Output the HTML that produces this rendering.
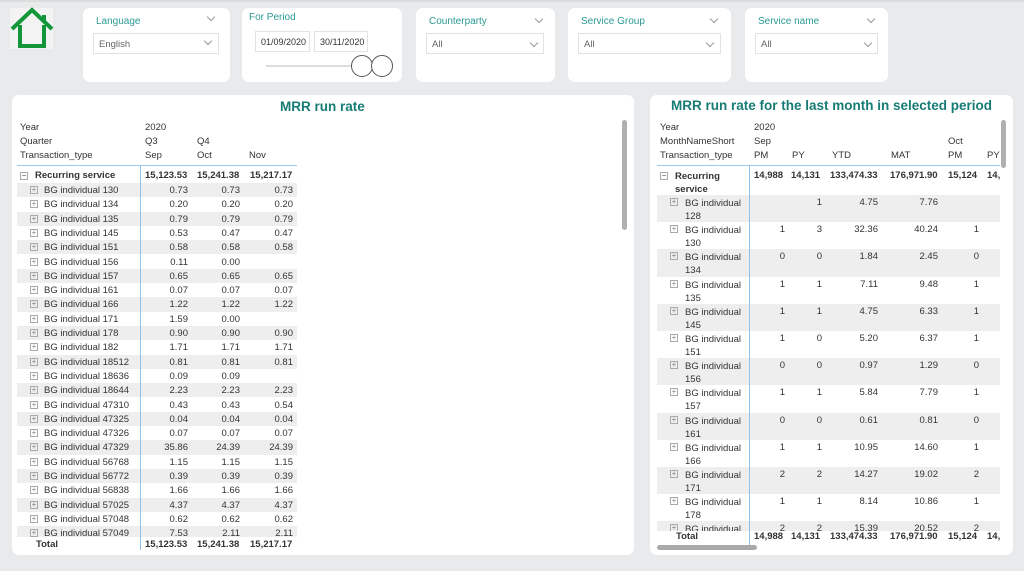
<!DOCTYPE html>
<html><head><meta charset="utf-8"><style>
*{margin:0;padding:0;box-sizing:border-box}
body{width:1024px;height:571px;background:#e9eaec;font-family:"Liberation Sans",sans-serif;position:relative;overflow:hidden;color:#333}
.a{position:absolute}
.card{position:absolute;background:#fff;border-radius:7px}
.lbl{position:absolute;color:#2b9a94;font-size:10px}
.chev{position:absolute;width:6px;height:6px;border-right:1px solid #999;border-bottom:1px solid #999;transform:rotate(45deg)}
.dd{position:absolute;border:1px solid #e2e2e2;height:21px;font-size:9.5px;color:#666;padding:5px 0 0 5px}
.t{font-size:9.5px;white-space:nowrap}
.r{position:absolute;left:0;height:14.3px;font-size:9.5px;white-space:nowrap}
.r span{position:absolute;top:2px}
.sh{background:#eeeeee}
.pl{position:absolute;width:8px;height:8px;border:1px solid #aaa;top:3px;font-size:8px;line-height:6px;text-align:center;color:#888;font-style:normal}
.pl::after{content:"+"}
.mn::after{content:"−"}
.rr{position:absolute;left:0;height:27.2px;font-size:9.5px;white-space:nowrap}
.rr span{position:absolute;top:2px}
.b{font-weight:bold}
</style></head><body>
<div class="a" style="left:0;top:0;width:1024px;height:2px;background:#dcdcdc"></div>
<div class="a" style="left:10px;top:8px;width:43px;height:41px;background:#f3f3f3"></div>
<svg class="a" style="left:10px;top:6px" width="44" height="44" viewBox="0 0 44 44"><path d="M2 23 L22 4 L42 23" fill="none" stroke="#13963a" stroke-width="4"/><path d="M34 9 V16" stroke="#13963a" stroke-width="4"/><path d="M10 19 V40 H34 V19" fill="none" stroke="#13963a" stroke-width="4"/></svg>

<div class="card" style="left:83px;top:8px;width:147px;height:74px"></div>
<div class="lbl" style="left:96px;top:16px">Language</div><div class="chev" style="left:208px;top:14px"></div>
<div class="dd" style="left:93px;top:33px;width:126px">English</div><div class="chev" style="left:205px;top:38px"></div>

<div class="card" style="left:242px;top:8px;width:160px;height:74px"></div>
<div class="lbl" style="left:249px;top:12px">For Period</div>
<div class="dd" style="left:255px;top:31px;width:55px;color:#333;font-size:9px">01/09/2020</div>
<div class="dd" style="left:314px;top:31px;width:54px;color:#333;font-size:9px">30/11/2020</div>
<div class="a" style="left:266px;top:65px;width:90px;height:2px;background:#ddd"></div>
<div class="a" style="left:351px;top:55px;width:22px;height:22px;border:1.5px solid #555;border-radius:50%;background:#fff"></div>
<div class="a" style="left:371px;top:55px;width:22px;height:22px;border:1.5px solid #555;border-radius:50%;background:#fff"></div>

<div class="card" style="left:416px;top:8px;width:139px;height:74px"></div>
<div class="lbl" style="left:429px;top:16px">Counterparty</div><div class="chev" style="left:536px;top:16px"></div>
<div class="dd" style="left:426px;top:33px;width:118px">All</div><div class="chev" style="left:531px;top:40px"></div>

<div class="card" style="left:568px;top:8px;width:163px;height:74px"></div>
<div class="lbl" style="left:581px;top:16px">Service Group</div><div class="chev" style="left:711px;top:16px"></div>
<div class="dd" style="left:578px;top:33px;width:143px">All</div><div class="chev" style="left:707px;top:40px"></div>

<div class="card" style="left:745px;top:8px;width:143px;height:74px"></div>
<div class="lbl" style="left:758px;top:16px">Service name</div><div class="chev" style="left:868px;top:16px"></div>
<div class="dd" style="left:755px;top:33px;width:123px">All</div><div class="chev" style="left:865px;top:40px"></div>

<!-- left panel -->
<div class="card" style="left:12px;top:95px;width:622px;height:460px"></div>
<div class="a b" style="left:280px;top:99px;font-size:13.5px;color:#177c75">MRR run rate</div>
<div class="a" style="left:622px;top:120px;width:5px;height:110px;background:#b0b0b0;border-radius:3px"></div>
<div class="a t" style="left:20px;top:122px">Year</div><div class="a t" style="left:145px;top:122px">2020</div>
<div class="a t" style="left:20px;top:136px">Quarter</div><div class="a t" style="left:145px;top:136px">Q3</div><div class="a t" style="left:197px;top:136px">Q4</div>
<div class="a t" style="left:20px;top:150px">Transaction_type</div><div class="a t" style="left:145px;top:150px">Sep</div><div class="a t" style="left:197px;top:150px">Oct</div><div class="a t" style="left:249px;top:150px">Nov</div>
<div class="a" style="left:17px;top:165px;width:280px;height:1px;background:#9cc9ee"></div>
<div class="a b t" style="left:20px;top:170px"><i class="pl mn" style="left:0;top:2px"></i><span style="margin-left:15px">Recurring service</span></div>
<div class="a b t" style="left:145px;top:170px">15,123.53</div><div class="a b t" style="left:197px;top:170px">15,241.38</div><div class="a b t" style="left:250px;top:170px">15,217.17</div>
<div class="a" style="left:17px;top:183px;width:280px;height:354px;overflow:hidden">
<div style="position:relative">
<div class="r sh" style="top:0;width:280px"><i class="pl" style="left:13px"></i><span style="left:27px">BG individual 130</span><span style="right:109px">0.73</span><span style="right:57px">0.73</span><span style="right:4px">0.73</span></div>
<div class="r" style="top:14.3px;width:280px"><i class="pl" style="left:13px"></i><span style="left:27px">BG individual 134</span><span style="right:109px">0.20</span><span style="right:57px">0.20</span><span style="right:4px">0.20</span></div>
<div class="r sh" style="top:28.6px;width:280px"><i class="pl" style="left:13px"></i><span style="left:27px">BG individual 135</span><span style="right:109px">0.79</span><span style="right:57px">0.79</span><span style="right:4px">0.79</span></div>
<div class="r" style="top:42.9px;width:280px"><i class="pl" style="left:13px"></i><span style="left:27px">BG individual 145</span><span style="right:109px">0.53</span><span style="right:57px">0.47</span><span style="right:4px">0.47</span></div>
<div class="r sh" style="top:57.2px;width:280px"><i class="pl" style="left:13px"></i><span style="left:27px">BG individual 151</span><span style="right:109px">0.58</span><span style="right:57px">0.58</span><span style="right:4px">0.58</span></div>
<div class="r" style="top:71.5px;width:280px"><i class="pl" style="left:13px"></i><span style="left:27px">BG individual 156</span><span style="right:109px">0.11</span><span style="right:57px">0.00</span></div>
<div class="r sh" style="top:85.8px;width:280px"><i class="pl" style="left:13px"></i><span style="left:27px">BG individual 157</span><span style="right:109px">0.65</span><span style="right:57px">0.65</span><span style="right:4px">0.65</span></div>
<div class="r" style="top:100.1px;width:280px"><i class="pl" style="left:13px"></i><span style="left:27px">BG individual 161</span><span style="right:109px">0.07</span><span style="right:57px">0.07</span><span style="right:4px">0.07</span></div>
<div class="r sh" style="top:114.4px;width:280px"><i class="pl" style="left:13px"></i><span style="left:27px">BG individual 166</span><span style="right:109px">1.22</span><span style="right:57px">1.22</span><span style="right:4px">1.22</span></div>
<div class="r" style="top:128.7px;width:280px"><i class="pl" style="left:13px"></i><span style="left:27px">BG individual 171</span><span style="right:109px">1.59</span><span style="right:57px">0.00</span></div>
<div class="r sh" style="top:143px;width:280px"><i class="pl" style="left:13px"></i><span style="left:27px">BG individual 178</span><span style="right:109px">0.90</span><span style="right:57px">0.90</span><span style="right:4px">0.90</span></div>
<div class="r" style="top:157.3px;width:280px"><i class="pl" style="left:13px"></i><span style="left:27px">BG individual 182</span><span style="right:109px">1.71</span><span style="right:57px">1.71</span><span style="right:4px">1.71</span></div>
<div class="r sh" style="top:171.6px;width:280px"><i class="pl" style="left:13px"></i><span style="left:27px">BG individual 18512</span><span style="right:109px">0.81</span><span style="right:57px">0.81</span><span style="right:4px">0.81</span></div>
<div class="r" style="top:185.9px;width:280px"><i class="pl" style="left:13px"></i><span style="left:27px">BG individual 18636</span><span style="right:109px">0.09</span><span style="right:57px">0.09</span></div>
<div class="r sh" style="top:200.2px;width:280px"><i class="pl" style="left:13px"></i><span style="left:27px">BG individual 18644</span><span style="right:109px">2.23</span><span style="right:57px">2.23</span><span style="right:4px">2.23</span></div>
<div class="r" style="top:214.5px;width:280px"><i class="pl" style="left:13px"></i><span style="left:27px">BG individual 47310</span><span style="right:109px">0.43</span><span style="right:57px">0.43</span><span style="right:4px">0.54</span></div>
<div class="r sh" style="top:228.8px;width:280px"><i class="pl" style="left:13px"></i><span style="left:27px">BG individual 47325</span><span style="right:109px">0.04</span><span style="right:57px">0.04</span><span style="right:4px">0.04</span></div>
<div class="r" style="top:243.1px;width:280px"><i class="pl" style="left:13px"></i><span style="left:27px">BG individual 47326</span><span style="right:109px">0.07</span><span style="right:57px">0.07</span><span style="right:4px">0.07</span></div>
<div class="r sh" style="top:257.4px;width:280px"><i class="pl" style="left:13px"></i><span style="left:27px">BG individual 47329</span><span style="right:109px">35.86</span><span style="right:57px">24.39</span><span style="right:4px">24.39</span></div>
<div class="r" style="top:271.7px;width:280px"><i class="pl" style="left:13px"></i><span style="left:27px">BG individual 56768</span><span style="right:109px">1.15</span><span style="right:57px">1.15</span><span style="right:4px">1.15</span></div>
<div class="r sh" style="top:286px;width:280px"><i class="pl" style="left:13px"></i><span style="left:27px">BG individual 56772</span><span style="right:109px">0.39</span><span style="right:57px">0.39</span><span style="right:4px">0.39</span></div>
<div class="r" style="top:300.3px;width:280px"><i class="pl" style="left:13px"></i><span style="left:27px">BG individual 56838</span><span style="right:109px">1.66</span><span style="right:57px">1.66</span><span style="right:4px">1.66</span></div>
<div class="r sh" style="top:314.6px;width:280px"><i class="pl" style="left:13px"></i><span style="left:27px">BG individual 57025</span><span style="right:109px">4.37</span><span style="right:57px">4.37</span><span style="right:4px">4.37</span></div>
<div class="r" style="top:328.9px;width:280px"><i class="pl" style="left:13px"></i><span style="left:27px">BG individual 57048</span><span style="right:109px">0.62</span><span style="right:57px">0.62</span><span style="right:4px">0.62</span></div>
<div class="r sh" style="top:343.2px;width:280px"><i class="pl" style="left:13px"></i><span style="left:27px">BG individual 57049</span><span style="right:109px">7.53</span><span style="right:57px">2.11</span><span style="right:4px">2.11</span></div>
</div></div>
<div class="a" style="left:140px;top:165px;width:1px;height:385px;background:#8fc1ea"></div>
<div class="a b t" style="left:36px;top:539px">Total</div>
<div class="a b t" style="left:145px;top:539px">15,123.53</div><div class="a b t" style="left:197px;top:539px">15,241.38</div><div class="a b t" style="left:250px;top:539px">15,217.17</div>

<!-- right panel -->
<div class="card" style="left:650px;top:95px;width:363px;height:460px"></div>
<div class="a b" style="left:671px;top:98px;font-size:13.5px;color:#177c75">MRR run rate for the last month in selected period</div>
<div class="a" style="left:1001px;top:120px;width:5px;height:48px;background:#b0b0b0;border-radius:3px"></div>
<div class="a" style="left:650px;top:118px;width:350px;height:440px;overflow:hidden">
<div class="a t" style="left:10px;top:4px">Year</div><div class="a t" style="left:104px;top:4px">2020</div>
<div class="a t" style="left:10px;top:18px">MonthNameShort</div><div class="a t" style="left:104px;top:18px">Sep</div><div class="a t" style="left:298px;top:18px">Oct</div>
<div class="a t" style="left:10px;top:32px">Transaction_type</div><div class="a t" style="left:104px;top:32px">PM</div><div class="a t" style="left:142px;top:32px">PY</div><div class="a t" style="left:182px;top:32px">YTD</div><div class="a t" style="left:241px;top:32px">MAT</div><div class="a t" style="left:298px;top:32px">PM</div><div class="a t" style="left:337px;top:32px">PY</div>
<div class="a" style="left:7px;top:47px;width:345px;height:1px;background:#9cc9ee"></div>
<div class="a b t" style="left:10px;top:52px"><i class="pl mn" style="left:0;top:2px"></i><span style="position:absolute;left:15px;line-height:13px">Recurring<br>service</span></div>
<div class="a b t" style="left:104px;top:52px">14,988</div><div class="a b t" style="left:141px;top:52px">14,131</div><div class="a b t" style="left:180px;top:52px">133,474.33</div><div class="a b t" style="left:240px;top:52px">176,971.90</div><div class="a b t" style="left:298px;top:52px">15,124</div><div class="a b t" style="left:337px;top:52px">14,</div>
<div class="a" style="left:7px;top:77px;width:345px;height:336px;overflow:hidden">
<div class="rr sh" style="top:0;width:345px"><i class="pl" style="left:13px"></i><span style="left:28px;line-height:13px">BG individual<br>128</span><span style="right:180px">1</span><span style="right:124px">4.75</span><span style="right:64px">7.76</span></div>
<div class="rr" style="top:27.2px;width:345px"><i class="pl" style="left:13px"></i><span style="left:28px;line-height:13px">BG individual<br>130</span><span style="right:217px">1</span><span style="right:180px">3</span><span style="right:124px">32.36</span><span style="right:64px">40.24</span><span style="right:23px">1</span></div>
<div class="rr sh" style="top:54.4px;width:345px"><i class="pl" style="left:13px"></i><span style="left:28px;line-height:13px">BG individual<br>134</span><span style="right:217px">0</span><span style="right:180px">0</span><span style="right:124px">1.84</span><span style="right:64px">2.45</span><span style="right:23px">0</span></div>
<div class="rr" style="top:81.6px;width:345px"><i class="pl" style="left:13px"></i><span style="left:28px;line-height:13px">BG individual<br>135</span><span style="right:217px">1</span><span style="right:180px">1</span><span style="right:124px">7.11</span><span style="right:64px">9.48</span><span style="right:23px">1</span></div>
<div class="rr sh" style="top:108.8px;width:345px"><i class="pl" style="left:13px"></i><span style="left:28px;line-height:13px">BG individual<br>145</span><span style="right:217px">1</span><span style="right:180px">1</span><span style="right:124px">4.75</span><span style="right:64px">6.33</span><span style="right:23px">1</span></div>
<div class="rr" style="top:136px;width:345px"><i class="pl" style="left:13px"></i><span style="left:28px;line-height:13px">BG individual<br>151</span><span style="right:217px">1</span><span style="right:180px">0</span><span style="right:124px">5.20</span><span style="right:64px">6.37</span><span style="right:23px">1</span></div>
<div class="rr sh" style="top:163.2px;width:345px"><i class="pl" style="left:13px"></i><span style="left:28px;line-height:13px">BG individual<br>156</span><span style="right:217px">0</span><span style="right:180px">0</span><span style="right:124px">0.97</span><span style="right:64px">1.29</span><span style="right:23px">0</span></div>
<div class="rr" style="top:190.4px;width:345px"><i class="pl" style="left:13px"></i><span style="left:28px;line-height:13px">BG individual<br>157</span><span style="right:217px">1</span><span style="right:180px">1</span><span style="right:124px">5.84</span><span style="right:64px">7.79</span><span style="right:23px">1</span></div>
<div class="rr sh" style="top:217.6px;width:345px"><i class="pl" style="left:13px"></i><span style="left:28px;line-height:13px">BG individual<br>161</span><span style="right:217px">0</span><span style="right:180px">0</span><span style="right:124px">0.61</span><span style="right:64px">0.81</span><span style="right:23px">0</span></div>
<div class="rr" style="top:244.8px;width:345px"><i class="pl" style="left:13px"></i><span style="left:28px;line-height:13px">BG individual<br>166</span><span style="right:217px">1</span><span style="right:180px">1</span><span style="right:124px">10.95</span><span style="right:64px">14.60</span><span style="right:23px">1</span></div>
<div class="rr sh" style="top:272px;width:345px"><i class="pl" style="left:13px"></i><span style="left:28px;line-height:13px">BG individual<br>171</span><span style="right:217px">2</span><span style="right:180px">2</span><span style="right:124px">14.27</span><span style="right:64px">19.02</span><span style="right:23px">2</span></div>
<div class="rr" style="top:299.2px;width:345px"><i class="pl" style="left:13px"></i><span style="left:28px;line-height:13px">BG individual<br>178</span><span style="right:217px">1</span><span style="right:180px">1</span><span style="right:124px">8.14</span><span style="right:64px">10.86</span><span style="right:23px">1</span></div>
<div class="rr sh" style="top:326.4px;width:345px"><i class="pl" style="left:13px"></i><span style="left:28px;line-height:13px">BG individual<br>182</span><span style="right:217px">2</span><span style="right:180px">2</span><span style="right:124px">15.39</span><span style="right:64px">20.52</span><span style="right:23px">2</span></div>
</div>
<div class="a" style="left:99px;top:47px;width:1px;height:380px;background:#8fc1ea"></div>
<div class="a b t" style="left:26px;top:413px">Total</div>
<div class="a b t" style="left:104px;top:413px">14,988</div><div class="a b t" style="left:141px;top:413px">14,131</div><div class="a b t" style="left:180px;top:413px">133,474.33</div><div class="a b t" style="left:240px;top:413px">176,971.90</div><div class="a b t" style="left:298px;top:413px">15,124</div><div class="a b t" style="left:337px;top:413px">14,</div>
</div>
<div class="a" style="left:657px;top:545px;width:100px;height:5px;background:#aaa;border-radius:3px"></div>
</body></html>
